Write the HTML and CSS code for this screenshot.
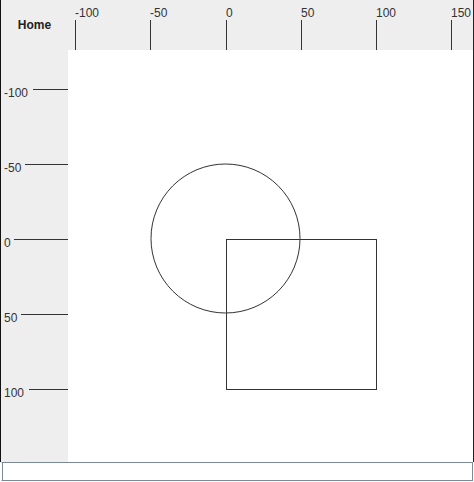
FILE: index.html
```html
<!DOCTYPE html>
<html>
<head>
<meta charset="utf-8">
<link rel="stylesheet" href="styles.css">
</head>
<body>
<div class="frame">
  <div class="corner"><span class="home">Home</span></div>
  <div class="ruler ruler-top">
    <svg width="405" height="50" viewBox="0 0 405 50">
      <g class="labels">
        <text x="7" y="17">-100</text>
        <text x="82" y="17">-50</text>
        <text x="158" y="17">0</text>
        <text x="233" y="17">50</text>
        <text x="308" y="17">100</text>
        <text x="383" y="17">150</text>
      </g>
      <g class="ticks">
        <line x1="7.5" y1="20" x2="7.5" y2="50"/>
        <line x1="82.5" y1="20" x2="82.5" y2="50"/>
        <line x1="158.5" y1="20" x2="158.5" y2="50"/>
        <line x1="233.5" y1="20" x2="233.5" y2="50"/>
        <line x1="308.5" y1="20" x2="308.5" y2="50"/>
        <line x1="383.5" y1="20" x2="383.5" y2="50"/>
      </g>
    </svg>
  </div>
  <div class="ruler ruler-left">
    <svg width="67" height="412" viewBox="0 0 67 412">
      <g class="labels">
        <text x="3" y="47">-100</text>
        <text x="3" y="122">-50</text>
        <text x="3" y="197">0</text>
        <text x="3" y="272">50</text>
        <text x="3" y="347">100</text>
      </g>
      <g class="ticks">
        <line x1="32" y1="39.5" x2="67" y2="39.5"/>
        <line x1="24" y1="114.5" x2="67" y2="114.5"/>
        <line x1="13" y1="189.5" x2="67" y2="189.5"/>
        <line x1="20" y1="264.5" x2="67" y2="264.5"/>
        <line x1="28" y1="339.5" x2="67" y2="339.5"/>
      </g>
    </svg>
  </div>
  <div class="canvas">
    <svg width="405" height="412" viewBox="0 0 405 412">
      <circle class="shape" cx="157.5" cy="188.5" r="74.5"/>
      <rect class="shape crisp" x="158.5" y="189.5" width="150" height="150"/>
    </svg>
  </div>
</div>
<div class="input-row">
  <input class="field" type="text">
</div>
</body>
</html>
```

FILE: styles.css
```css
html, body {
  margin: 0;
  padding: 0;
  background: #ffffff;
}

body {
  width: 474px;
  height: 482px;
  overflow: hidden;
  font-family: "Liberation Sans", Arial, sans-serif;
}

.frame {
  display: grid;
  grid-template-columns: 67px 405px;
  grid-template-rows: 50px 412px;
  border-left: 1px solid #111111;
  border-right: 1px solid #222222;
  width: 472px;
  height: 462px;
}

.corner {
  background: #eeeeee;
  display: flex;
  justify-content: center;
  align-items: flex-start;
  padding-top: 18px;
  box-sizing: border-box;
}

.home {
  font-weight: bold;
  font-size: 12px;
  line-height: 14px;
  color: #222222;
}

.ruler {
  background: #eeeeee;
}

.ruler svg,
.canvas svg {
  display: block;
}

.labels text {
  font-family: "Liberation Sans", Arial, sans-serif;
  font-size: 12px;
  fill: #333333;
}

.ticks line {
  stroke: #333333;
  stroke-width: 1;
  shape-rendering: crispEdges;
}

.canvas {
  background: #ffffff;
}

.shape {
  fill: none;
  stroke: #333333;
  stroke-width: 1;
}

.crisp {
  shape-rendering: crispEdges;
}

.input-row {
  height: 20px;
  padding: 0 0 0 1px;
}

.field {
  display: block;
  box-sizing: border-box;
  width: 472px;
  height: 19px;
  margin: 0;
  padding: 0 3px;
  border: 1px solid #7a8a99;
  border-left-color: #ffffff;
  box-shadow: inset 1px 0 0 #7a8a99;
  background: #ffffff;
  outline: none;
  font-family: "Liberation Sans", Arial, sans-serif;
  font-size: 12px;
}
```
